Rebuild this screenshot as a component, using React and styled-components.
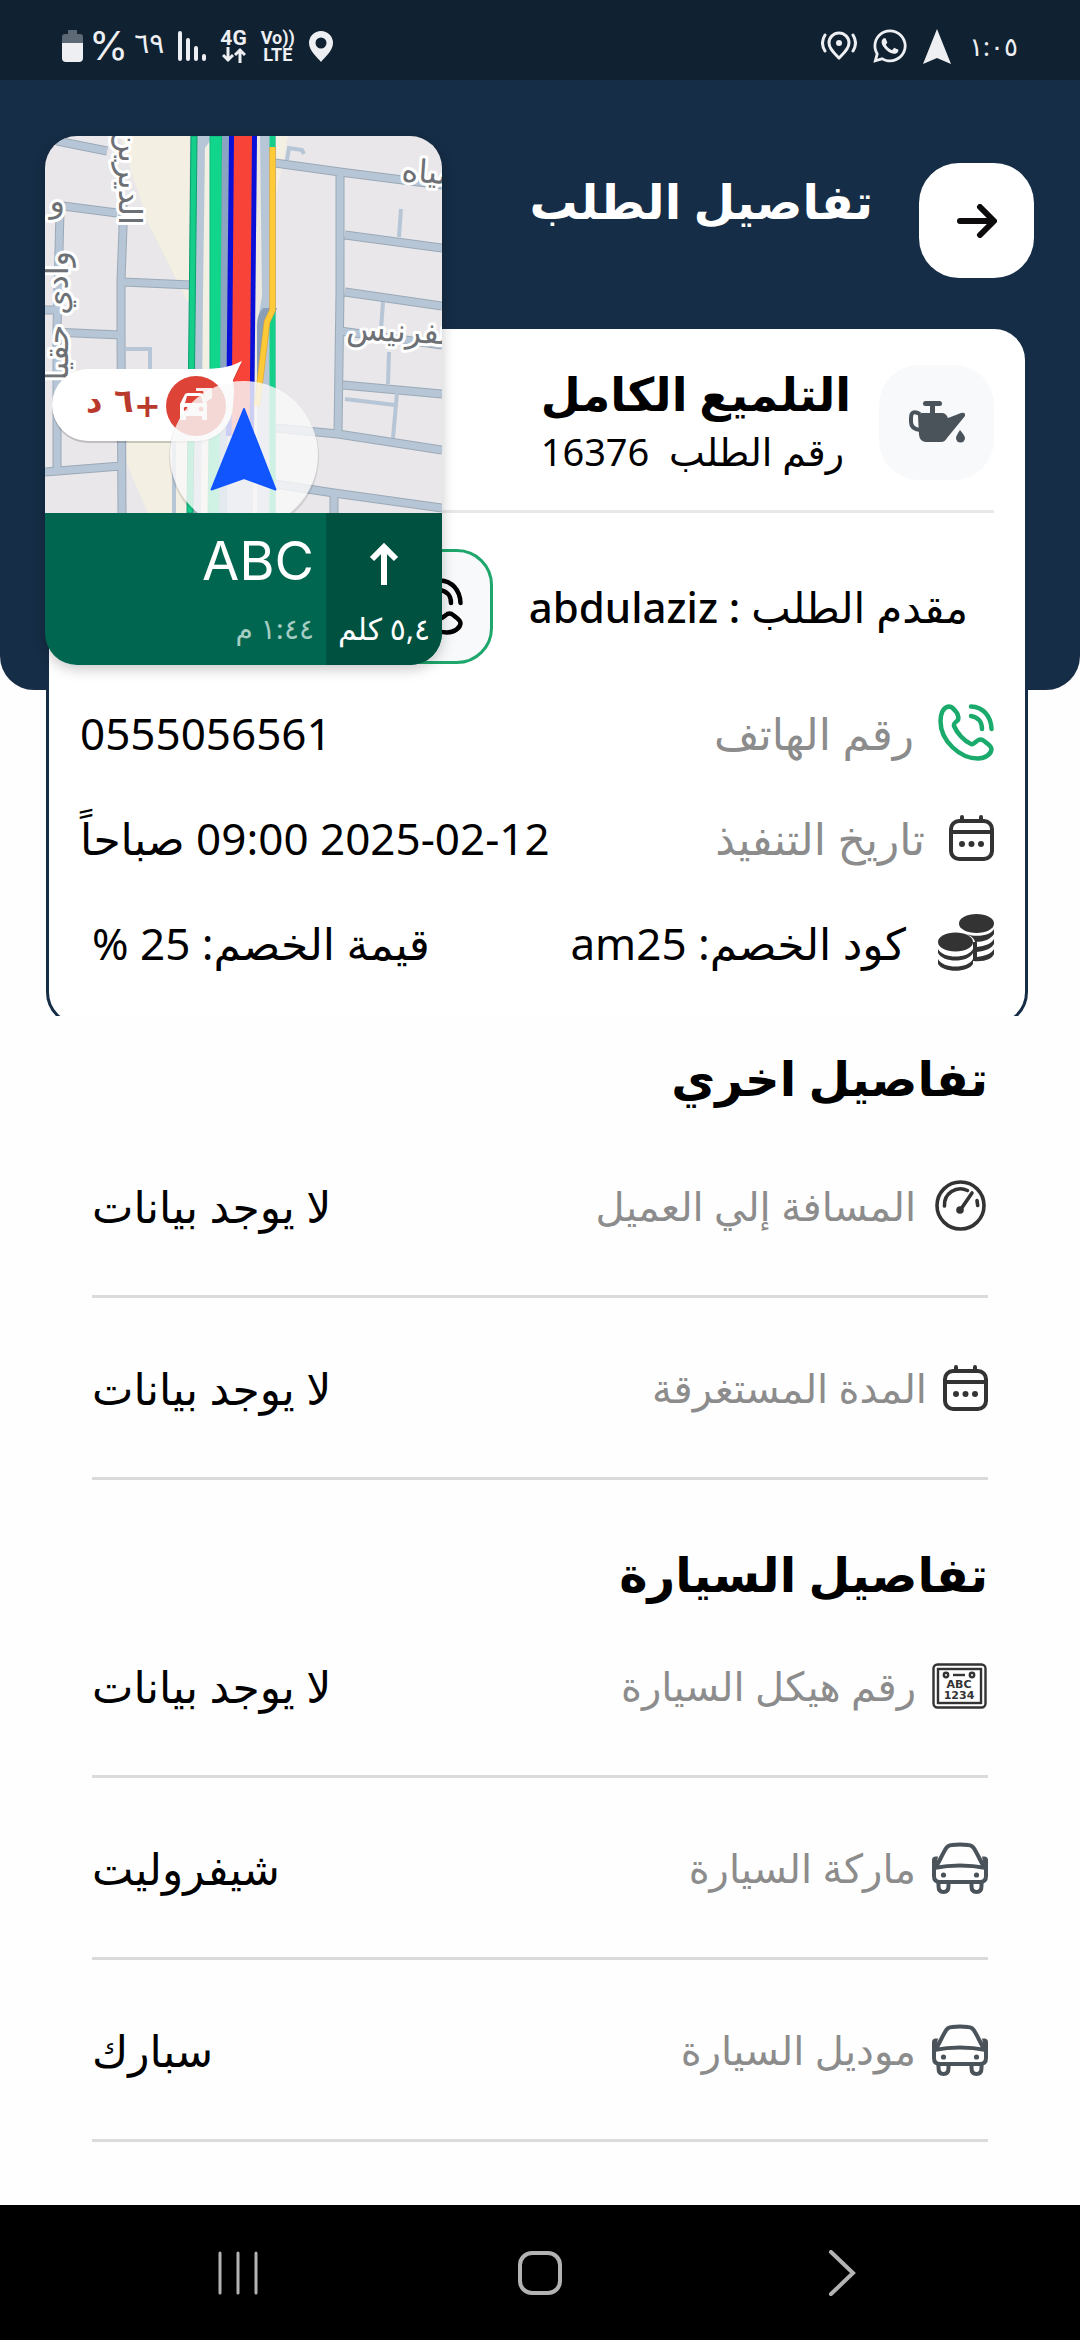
import styled, { createGlobalStyle } from "styled-components";
import { FaWhatsapp } from "react-icons/fa";

const GlobalStyle = createGlobalStyle`
  * {
    box-sizing: border-box;
  }

  body {
    margin: 0;
    background-color: #fefefe;
    color: #000000;
    font-family: "Noto Sans", "DejaVu Sans", sans-serif;
  }

  button {
    padding: 0;
    border: none;
    background: none;
    cursor: pointer;
  }

  svg {
    display: block;
    flex-shrink: 0;
  }
`;

const Screen = styled.div`
  position: relative;
  min-height: 100vh;
  display: flex;
  flex-direction: column;
`;

const StatusBar = styled.div`
  display: flex;
  align-items: center;
  justify-content: space-between;
  height: 80px;
  padding: 12px 62px 0 62px;
  background-color: #102232;
  color: #eeeff2;
`;

const StatusGroup = styled.div`
  display: flex;
  align-items: center;
  gap: 14px;
`;

const Battery = styled.span`
  display: flex;
  align-items: center;
  gap: 6px;
  font-family: Inter, "DejaVu Sans", sans-serif;
  font-size: 40px;
  line-height: 32px;
`;

const BatteryDigits = styled.span`
  padding-bottom: 6px;
  font-size: 28px;
`;

const Clock = styled.time`
  padding-left: 4px;
  font-size: 26px;
  line-height: 32px;
`;

const Network = styled.span`
  display: flex;
  flex-direction: column;
  align-items: center;
  font-family: Roboto, sans-serif;
  font-size: ${(props) => (props.$large ? 21 : 18)}px;
  font-weight: 700;
  line-height: 17px;
`;

const Header = styled.header`
  display: flex;
  align-items: flex-start;
  gap: 46px;
  padding: 83px 46px 412px;
  border-radius: 0 0 34px 34px;
  background-color: #152d46;
`;

const BackButton = styled.button`
  display: flex;
  align-items: center;
  justify-content: center;
  width: 115px;
  height: 115px;
  border-radius: 40px;
  background-color: #ffffff;
`;

const PageTitle = styled.h1`
  margin: 0;
  color: #ffffff;
  font-size: 48px;
  line-height: 76px;
`;

const CardArea = styled.div`
  margin-top: -364px;
  padding: 0 52px 0 46px;
  overflow: hidden;
`;

const Card = styled.section`
  margin-bottom: -10px;
  padding: 35px 31px 28px;
  border: 3px solid #152d46;
  border-radius: 34px;
  background-color: #ffffff;
`;

const Service = styled.div`
  display: flex;
  align-items: center;
  gap: 28px;
  padding-bottom: 30px;
  border-bottom: 3px solid #e8e8e8;
`;

const IconTile = styled.div`
  display: flex;
  align-items: center;
  justify-content: center;
  width: 115px;
  height: 115px;
  border-radius: 40px;
  background-color: #f8f9fb;
`;

const ServiceName = styled.h2`
  margin: 0;
  font-size: 46px;
  line-height: 58px;
`;

const OrderNumber = styled.p`
  margin: 0;
  padding-right: 7px;
  font-size: 38px;
  line-height: 58px;
`;

const Customer = styled.div`
  display: flex;
  align-items: center;
  gap: 36px;
  padding: 36px 26px 16px 0;
  font-size: 42px;
  font-weight: 500;
`;

const CallButton = styled.button`
  display: flex;
  align-items: center;
  justify-content: center;
  width: 115px;
  height: 115px;
  border: 3px solid #1ea76c;
  border-radius: 36px;
  background-color: #f8f9fb;
  color: #000000;
`;

const Facts = styled.dl`
  margin: 0;
`;

const Fact = styled.div`
  display: flex;
  align-items: center;
  justify-content: space-between;
  height: 105px;
  font-size: 44px;
`;

const FactLabel = styled.dt`
  display: flex;
  align-items: center;
  gap: ${(props) => (props.$strong ? 32 : 24)}px;
  color: ${(props) => (props.$strong ? "#000000" : "#8c8c8c")};
`;

const FactValue = styled.dd`
  margin: 0;
  padding-left: ${(props) => (props.$inset ? 12 : 0)}px;
`;

const IconTint = styled.span`
  color: ${(props) => props.$color || "#333333"};
`;

const Details = styled.section`
  padding: 0 92px;
`;

const SectionTitle = styled.h2`
  margin: 0;
  padding: ${(props) => props.$space}px 0 8px;
  font-size: 48px;
  line-height: 60px;
`;

const Rows = styled.dl`
  margin: ${(props) => (props.$tight ? -16 : 0)}px 0 0;
`;

const Row = styled.div`
  display: flex;
  align-items: center;
  justify-content: space-between;
  min-height: 182px;
  border-bottom: 3px solid #dbdbdb;
`;

const RowLabel = styled.dt`
  display: flex;
  align-items: center;
  gap: 16px;
  color: #8c8c8c;
  font-size: 40px;
`;

const RowValue = styled.dd`
  margin: 0;
  font-size: 44px;
`;

const NavBar = styled.nav`
  display: flex;
  align-items: center;
  justify-content: space-between;
  height: 135px;
  margin-top: auto;
  padding: 0 216px;
  background-color: #000000;
`;

const NavButton = styled.button`
  display: flex;
  align-items: center;
  justify-content: center;
  height: 60px;
`;

/* floating navigation window, it sits over the page */
const MapWindow = styled.aside`
  position: absolute;
  top: 136px;
  left: 45px;
  width: 397px;
  border-radius: 32px;
  overflow: hidden;
  box-shadow: 0 4px 14px rgba(0, 0, 0, 0.22);
`;

const Guidance = styled.div`
  display: flex;
  height: 152px;
  background-color: #00664f;
  color: #ffffff;
`;

const Turn = styled.div`
  display: flex;
  flex-direction: column;
  align-items: center;
  justify-content: space-between;
  width: 116px;
  padding: 30px 0 16px;
  background-color: #00513f;
  font-size: 30px;
  line-height: 40px;
  white-space: nowrap;
`;

const Street = styled.div`
  display: flex;
  flex: 1;
  flex-direction: column;
  justify-content: space-between;
  padding: 16px 12px;
  font-family: Inter, "DejaVu Sans", sans-serif;
  font-size: 54px;
  line-height: 64px;
`;

const Arrival = styled.span`
  color: #a5cdc3;
  font-size: 28px;
  line-height: 40px;
`;

function PhoneIcon() {
  return (
    <svg width="56" height="57" viewBox="0 0 56 57" fill="none" stroke="currentColor" strokeWidth="4.500" strokeLinecap="round" strokeLinejoin="round">
      <path d="M11 2.500C5 3 2.500 10 2.500 17C2.500 37 22 54.500 40 54.500C47 54.500 53.500 50 53.500 45C53.500 42 50 40 46 37C44 35 41 35 39 37C37 38 35 41 33 40C26 37 19 29 16 22C15 20 18 18 20 16C21 13 20 11 19 9C16 5 14 2.500 11 2.500Z" />
      <path d="M33 2.500C45 3 53 12 53.500 25" />
      <path d="M33 12C40 13 44 18 44 25" />
    </svg>
  );
}

function CalendarIcon() {
  return (
    <svg width="45" height="46" viewBox="0 0 45 46" fill="none" stroke="#333333" strokeWidth="4" strokeLinecap="round">
      <rect x="2" y="6" width="41" height="38" rx="8" />
      <path d="M2 17H43M13 2V5M32 2V5" />
      <g fill="#333333" stroke="none">
        <circle cx="13" cy="29" r="3" />
        <circle cx="22.5" cy="29" r="3" />
        <circle cx="32" cy="29" r="3" />
      </g>
    </svg>
  );
}

function CoinsIcon() {
  return (
    <svg width="56" height="57" viewBox="0 0 56 57" fill="#333333">
      <ellipse cx="38.500" cy="9.500" rx="17.500" ry="9.500" />
      <path d="M56 15V20C53 25 46 28 37 28C36 24 33 22 28 20C40 24 53 21 56 15Z" />
      <path d="M56 25V30C53 35 47 37 39 38V33C47 32 53 30 56 25Z" />
      <path d="M56 35V40C54 45 47 48 35 47V28H39V43C47 42 53 40 56 35Z" />
      <ellipse cx="17.500" cy="28" rx="17.500" ry="9.500" />
      <path d="M0 35C5 45 30 45 35 35V39C30 49 5 49 0 39Z" />
      <path d="M0 45C5 55 30 55 35 45V50C30 59 5 59 0 50Z" />
    </svg>
  );
}

function GaugeIcon() {
  return (
    <svg width="56" height="51" viewBox="-3 0 56 51" fill="none" stroke="#333333" strokeWidth="3.600" strokeLinecap="round">
      <circle cx="25.500" cy="25.500" r="23.500" />
      <path d="M9.500 26A16 16 0 0 1 32.500 10.500" />
      <path d="M42 20.500L42.700 25.500M37 13L26 29" />
      <circle cx="25" cy="30" r="2" fill="#333333" />
    </svg>
  );
}

function PlateIcon() {
  return (
    <svg width="56" height="46" viewBox="0 0 56 46" fill="none" stroke="#333333" strokeWidth="2.400">
      <rect x="1.500" y="1.500" width="52" height="43" rx="4" />
      <rect x="6" y="6" width="43" height="34" />
      <circle cx="14" cy="12" r="2.200" />
      <circle cx="40" cy="12" r="2.200" />
      <path d="M21 12H33" />
      <g fill="#333333" stroke="none" fontFamily="DejaVu Sans" fontWeight="700" fontSize="11" textAnchor="middle" direction="ltr">
        <text x="27" y="25">ABC</text>
        <text x="27" y="36">1234</text>
      </g>
    </svg>
  );
}

function CarIcon() {
  return (
    <svg width="56" height="52" viewBox="0 0 56 52" fill="none" stroke="#4a525a" strokeWidth="4" strokeLinejoin="round">
      <path d="M4 25C7 20 9 15 13 8C15 4 17 3 20 3Q28 2 36 3C39 3 41 4 43 8C47 15 49 20 52 25" />
      <path d="M2 26Q28 21 54 26V34Q54 40 48 40H8Q2 40 2 34Z" />
      <path d="M6.500 40V44Q6.500 50 11.500 50T16.500 44V40M39.500 40V44Q39.500 50 44.500 50T49.500 44V40" />
      <path d="M6 14.500H3Q0 15 0 18V27L4 25ZM50 14.500H53Q56 15 56 18V27L52 25Z" fill="#4a525a" stroke="none" />
      <circle cx="11.500" cy="33" r="2.600" fill="#4a525a" stroke="none" />
      <circle cx="44.500" cy="33" r="2.600" fill="#4a525a" stroke="none" />
    </svg>
  );
}

function OilIcon() {
  return (
    <svg width="56" height="42" viewBox="0 0 56 42" fill="#4a525a">
      <rect x="14" y="0" width="19" height="5" rx="2.500" />
      <rect x="21" y="4" width="5" height="10" />
      <path d="M13 12H33Q37 12 39 17L52 12Q57 11 56 15L38 37Q36 41 32 41H17Q11 41 10 34L9 15Q9 12 13 12Z" />
      <path d="M11 13Q2 8 2 17V21Q2 28 11 29" fill="none" stroke="#4a525a" strokeWidth="4" />
      <path d="M51 29Q56 35 56 37A4.500 4.500 0 0 1 47 37Q47 35 51 29Z" />
    </svg>
  );
}

const streets =
  "M12 5L62 15M18 70L72 77M78 146L146 149M8 196L75 199M0 336L76 330M0 174H10M78 60V91L76 145V198L77 377M15 75L12 194V334M230 27L295 36L397 49M300 99L397 112M300 156L397 170M295 195L397 209M298 249L397 258M230 292L293 298L397 314M230 348L289 357L397 372M295 36V156L293 298M289 357V377";

function MapView() {
  return (
    <svg width="100%" viewBox="0 0 397 377" role="img" aria-label="خريطة">
      <rect width="397" height="377" fill="#e9e7e9" />
      <path d="M75 0H150L146 165H142L130 141L103 87ZM230 0H243L231 60ZM82 300H150V377H103L82 328Z" fill="#f3efe3" />
      <path d={streets} fill="none" stroke="#9ba9b7" strokeWidth="9" />
      <path d={streets} fill="none" stroke="#b6c6d6" strokeWidth="7" />
      <path d="M80 213H105V234M356 73L354 101M242 24L244 12L257 14L259 18M338 166L336 193M344 216L343 248M300 263L350 269M352 257L348 302M129 305V377" fill="none" stroke="#b6c6d6" strokeWidth="4" />

      {/* motorway lanes */}
      <path d="M145 0H231V377H143Z" fill="#b6c6d6" />
      <path d="M165 5L160 12L158 160L156 377H164L166 160V5Z" fill="#f3efe3" />
      <path d="M146 0H152L148 377H142Z" fill="#14ce89" stroke="#0d9f70" />
      <path d="M165 0H177L176 240L174 377H163L165 240Z" fill="#12d58c" stroke="#10b87d" />
      <path d="M177 0H184L182 377H174Z" fill="#8aa4c2" />
      <path d="M212 0H215L217 160L212 190V377H208Z" fill="#eeeae2" />
      <path d="M232 172L218 172Q212 178 212 190L212 265L224 195Z" fill="#8a9fb5" />
      <path d="M184 0H212L209 300H181Z" fill="#0b10d8" />
      <path d="M189 0H207L204.500 300H186.500Z" fill="#f74338" />
      <path d="M227.500 174V377M227.500 0V12" stroke="#14ce89" strokeWidth="6" />
      <path d="M227.500 11V174L222 186L212 270" fill="none" stroke="#dda93a" strokeWidth="6.500" />
      <path d="M227.500 11V174L222 186L212 270" fill="none" stroke="#ffca38" strokeWidth="5" />

      <g direction="rtl" fontFamily="DejaVu Sans" fontSize="32" fill="#6d7175" stroke="#ffffff" strokeWidth="6" strokeLinejoin="round" paintOrder="stroke">
        <text transform="translate(74 89) rotate(90)">الديرين</text>
        <text transform="translate(23 115) rotate(-90)">وادي حقيل</text>
        <text x="20" y="76">و</text>
        <text transform="translate(356 45) rotate(4)" textAnchor="end">مياه</text>
        <text transform="translate(301 203) rotate(3)" textAnchor="end">نفرنيس</text>
      </g>

      {/* delay bubble */}
      <g>
        <path d="M43 235H152C172 235 184 234 197 227L188 246Q190 256 188 270A36 36 0 0 1 152 307H43A36 36 0 0 1 43 235Z" fill="#000000" opacity="0.180" />
        <path d="M43 233H152C172 233 184 232 197 225L188 244Q190 254 188 269A36 36 0 0 1 152 305H43A36 36 0 0 1 43 233Z" fill="#ffffff" />
        <circle cx="151" cy="270" r="30" fill="#dd4337" />
        <g fill="#ffffff">
          <path d="M139 260Q140 257 143 257H155Q158 257 159 260L162 268V284H157V280H141V284H135V268Z" />
          <path d="M151 252H167V262L161 266L158 255H151Z" opacity="0.900" />
        </g>
        <path d="M142 260H156L158 267H140Z" fill="#dd4337" />
        <circle cx="141" cy="273" r="2.300" fill="#dd4337" />
        <circle cx="156" cy="273" r="2.300" fill="#dd4337" />
        <g fontFamily="DejaVu Sans" fontWeight="700" fontSize="32" fill="#b93a2c" direction="ltr">
          <text x="89" y="281">+</text>
          <text x="69" y="276">٦</text>
          <text x="41" y="276">د</text>
        </g>
      </g>

      <circle cx="199" cy="321" r="75" fill="#000000" opacity="0.100" />
      <circle cx="199" cy="319" r="74" fill="#ffffff" opacity="0.800" />
      <path d="M199 273L230.500 353.500L199 342L166.500 353.500Z" fill="#1155ff" stroke="#1155ff" strokeWidth="2" strokeLinejoin="round" />
    </svg>
  );
}

const cardFacts = [
  { icon: <PhoneIcon />, color: "#1aaa6b", label: "رقم الهاتف", value: "0555056561" },
  { icon: <CalendarIcon />, label: "تاريخ التنفيذ", value: "\u200f2025-02-12 09:00 صباحاً", date: true },
  { icon: <CoinsIcon />, label: "كود الخصم: am25", value: "قيمة الخصم: 25 %", strong: true },
];

const otherDetails = [
  { icon: <GaugeIcon />, label: "المسافة إلي العميل", value: "لا يوجد بيانات" },
  { icon: <CalendarIcon />, label: "المدة المستغرقة", value: "لا يوجد بيانات" },
];

const carDetails = [
  { icon: <PlateIcon />, label: "رقم هيكل السيارة", value: "لا يوجد بيانات" },
  { icon: <CarIcon />, label: "ماركة السيارة", value: "شيفروليت" },
  { icon: <CarIcon />, label: "موديل السيارة", value: "سبارك" },
];

function DetailRows({ rows, tight }) {
  return (
    <Rows $tight={tight}>
      {rows.map((row) => (
        <Row key={row.label}>
          <RowLabel>
            {row.icon}
            {row.label}
          </RowLabel>
          <RowValue>{row.value}</RowValue>
        </Row>
      ))}
    </Rows>
  );
}

export default function App() {
  return (
    <Screen dir="rtl" lang="ar">
      <GlobalStyle />
      <StatusBar dir="ltr">
        <StatusGroup>
          <Battery>
            <svg width="21" height="32" viewBox="0 0 21 32" fill="#eeeff2">
              <path d="M6 0H15V4H18Q21 4 21 7V14H0V7Q0 4 3 4H6Z" opacity="0.350" />
              <path d="M0 13H21V28Q21 32 17 32H4Q0 32 0 28Z" />
            </svg>
            <span>%</span>
            <BatteryDigits>٦٩</BatteryDigits>
          </Battery>
          <svg width="28" height="30" viewBox="0 0 28 30" stroke="#eeeff2" strokeWidth="4" strokeLinecap="round">
            <path d="M2 2V28M10 9V28M18 17V28M26 25V28" />
          </svg>
          <Network $large>
            4G
            <svg width="24" height="16" viewBox="0 0 24 16" fill="none" stroke="#eeeff2" strokeWidth="3">
              <path d="M6 0V14M1 8L6 13L11 8M18 16V2M13 8L18 3L23 8" />
            </svg>
          </Network>
          <Network>
            <span>Vo))</span>
            <span>LTE</span>
          </Network>
          <svg width="24" height="31" viewBox="0 0 24 31" fill="#eeeff2">
            <path fillRule="evenodd" d="M12 0A12 12 0 0 1 24 12C24 20 15 27 12 31C9 27 0 20 0 12A12 12 0 0 1 12 0ZM12 6.500A5.500 5.500 0 1 0 12 17.500A5.500 5.500 0 1 0 12 6.500Z" />
          </svg>
        </StatusGroup>
        <StatusGroup>
          <svg width="36" height="30" viewBox="0 0 36 30" fill="none" stroke="#eeeff2" strokeWidth="3" strokeLinecap="round">
            <path d="M18 27C14 23 8 18 8 12A10 10 0 0 1 28 12C28 18 22 23 18 27ZM4 4Q-1 12 4 20M32 4Q37 12 32 20" />
            <circle cx="18" cy="12" r="3" fill="#eeeff2" stroke="none" />
          </svg>
          <FaWhatsapp size={38} />
          <svg width="28" height="35" viewBox="0 0 28 35" fill="#eeeff2">
            <path d="M14 0L28 35L14 29L0 35Z" />
          </svg>
          <Clock>١:٠٥</Clock>
        </StatusGroup>
      </StatusBar>

      <Header>
        <BackButton aria-label="رجوع">
          <svg width="40" height="34" viewBox="0 0 40 34" fill="none" stroke="#0d0b0c" strokeWidth="6" strokeLinecap="round" strokeLinejoin="round">
            <path d="M3 17H36M23 3L37 17L23 31" />
          </svg>
        </BackButton>
        <PageTitle>تفاصيل الطلب</PageTitle>
      </Header>

      <CardArea>
        <Card>
          <Service>
            <IconTile>
              <OilIcon />
            </IconTile>
            <div>
              <ServiceName>التلميع الكامل</ServiceName>
              <OrderNumber>رقم الطلب &nbsp;16376</OrderNumber>
            </div>
          </Service>
          <Customer>
            <span>مقدم الطلب : abdulaziz</span>
            <CallButton aria-label="اتصال">
              <PhoneIcon />
            </CallButton>
          </Customer>
          <Facts>
            {cardFacts.map((fact) => (
              <Fact key={fact.label}>
                <FactLabel $strong={fact.strong}>
                  <IconTint $color={fact.color}>{fact.icon}</IconTint>
                  {fact.label}
                </FactLabel>
                <FactValue $inset={fact.strong} dir={fact.date ? "ltr" : undefined}>
                  {fact.value}
                </FactValue>
              </Fact>
            ))}
          </Facts>
        </Card>
      </CardArea>

      <Details>
        <SectionTitle $space={32}>تفاصيل اخري</SectionTitle>
        <DetailRows rows={otherDetails} />
        <SectionTitle $space={64}>تفاصيل السيارة</SectionTitle>
        <DetailRows rows={carDetails} tight />
      </Details>

      <NavBar dir="ltr">
        <NavButton aria-label="التطبيقات الأخيرة">
          <svg width="44" height="44" viewBox="0 0 44 44" stroke="#b3b3b3" strokeWidth="3" strokeLinecap="round">
            <path d="M4 2V42M22 2V42M40 2V42" />
          </svg>
        </NavButton>
        <NavButton aria-label="الرئيسية">
          <svg width="44" height="44" viewBox="0 0 44 44" fill="none" stroke="#b3b3b3" strokeWidth="4">
            <rect x="2" y="2" width="40" height="40" rx="12" />
          </svg>
        </NavButton>
        <NavButton aria-label="رجوع">
          <svg width="44" height="46" viewBox="-8 0 44 46" fill="none" stroke="#b3b3b3" strokeWidth="4" strokeLinecap="round">
            <path d="M3 2L25 23L3 44" />
          </svg>
        </NavButton>
      </NavBar>

      <MapWindow>
        <MapView />
        <Guidance>
          <Turn>
            <svg width="30" height="42" viewBox="0 0 30 42" fill="none" stroke="#ffffff" strokeWidth="6">
              <path d="M15 42V5M3 16L15 4L27 16" />
            </svg>
            <span>٥,٤ كلم</span>
          </Turn>
          <Street>
            <span>ABC</span>
            <Arrival>١:٤٤ م</Arrival>
          </Street>
        </Guidance>
      </MapWindow>
    </Screen>
  );
}
